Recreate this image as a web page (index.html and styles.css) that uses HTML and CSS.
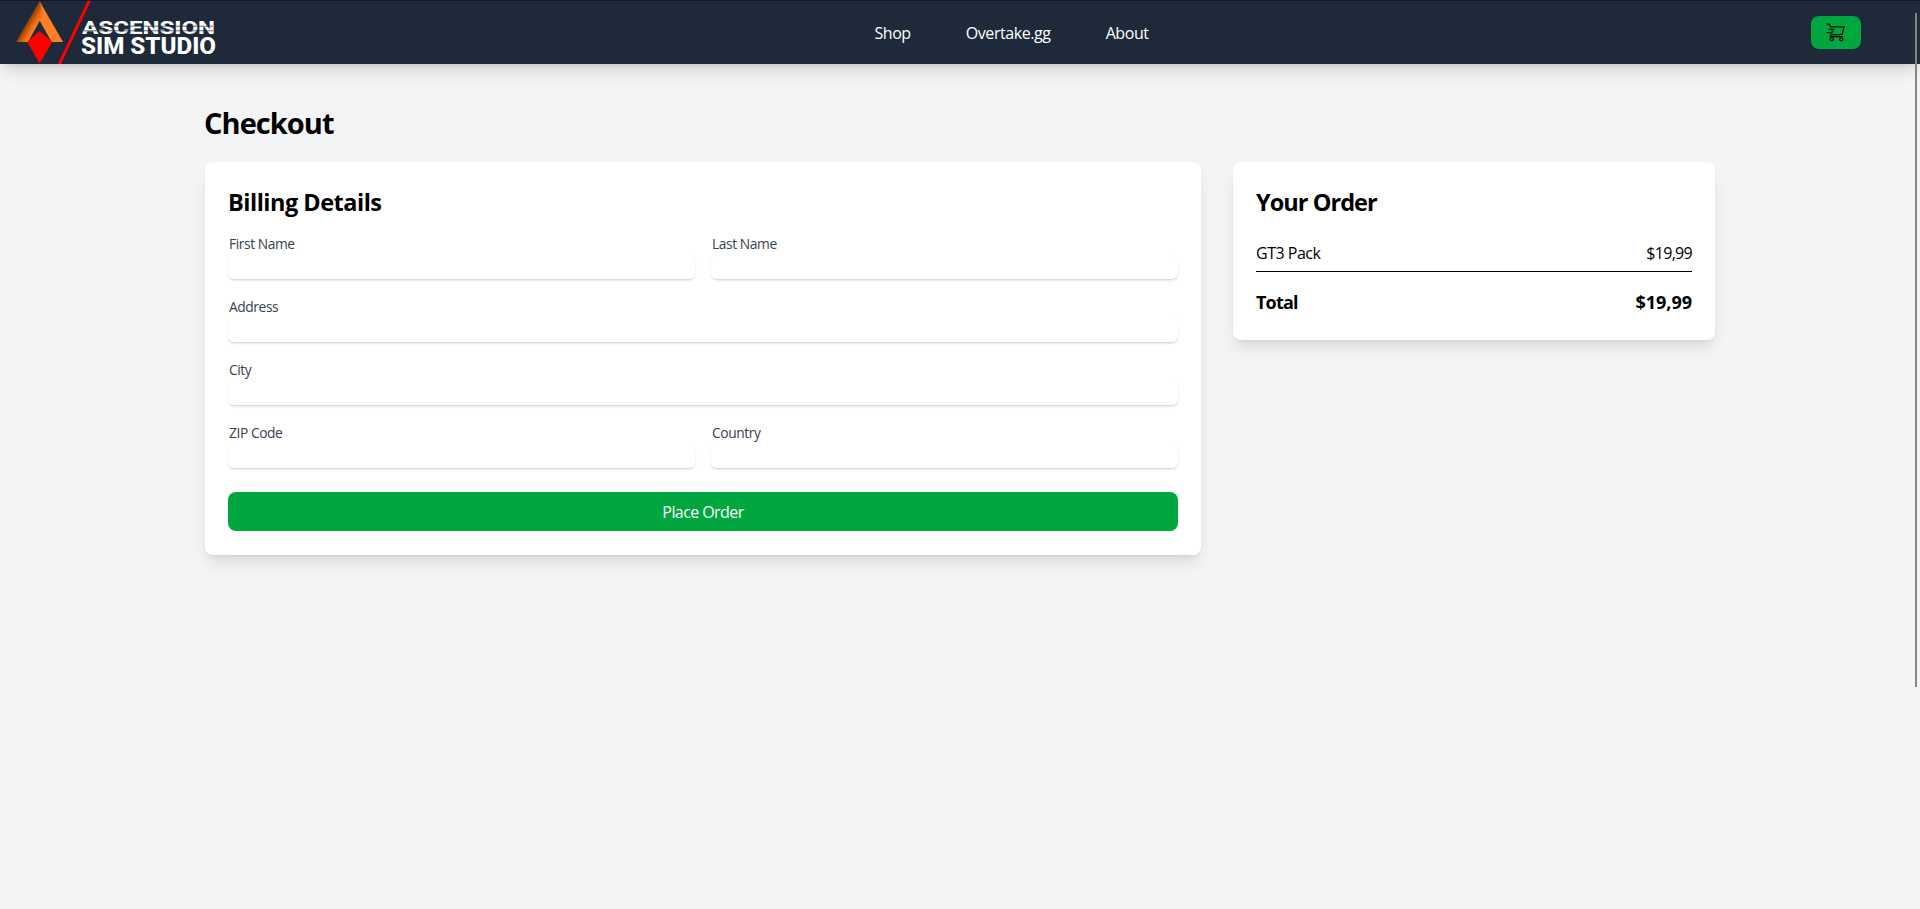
FILE: index.html
```html
<!DOCTYPE html>
<html lang="en">
<head>
<meta charset="utf-8">
<title>Checkout</title>
<link rel="stylesheet" href="styles.css">
</head>
<body>
<header class="header">
  <svg class="logo" viewBox="16 0 195 63" role="img" aria-label="Ascension Sim Studio">
    <defs>
      <linearGradient id="leg" gradientUnits="userSpaceOnUse" x1="25" y1="19" x2="37" y2="26">
        <stop offset="0" stop-color="#5a2606"/>
        <stop offset=".35" stop-color="#a84a0a"/>
        <stop offset=".7" stop-color="#ef6c12"/>
        <stop offset="1" stop-color="#ff7f27"/>
      </linearGradient>
    </defs>
    <path d="M39.5 0L63 41H51.7L39.5 19.5L36 13Z" fill="#ff7f27"/>
    <path d="M39.5 0L16 41H28L43.5 13Z" fill="url(#leg)"/>
    <path d="M39.5 30L52.3 41L39.5 62.5L27.2 41Z" fill="#f00"/>
    <path d="M87.6 0H90.8L61 63H57.8Z" fill="#f00"/>
    <text class="logo-top" x="82" y="33" textLength="133" lengthAdjust="spacingAndGlyphs">ASCENSION</text>
    <path d="M88 25.2H213M84 29.8H213" stroke="#1e2939" stroke-width=".7"/>
    <text class="logo-bottom" x="81" y="52.6" textLength="135" lengthAdjust="spacingAndGlyphs">SIM STUDIO</text>
  </svg>
  <nav class="nav">
    <a class="nav-link">Shop</a>
    <a class="nav-link">Overtake.gg</a>
    <a class="nav-link">About</a>
  </nav>
  <button class="cart" aria-label="Cart">
    <svg class="cart-icon" viewBox="0 0 20 20">
      <path d="M1.5 2.3V1.2H3.4L4.6 3.8H18.2L15.9 11.6H5.6Q4 11.9 4.2 13.7H16.8M2.5 6.3H8.6M5.5 8.1H7.5M.4 9.7H6.6"/>
      <circle cx="5.7" cy="16.2" r="1.6"/><circle cx="15.3" cy="16.2" r="1.6"/>
    </svg>
  </button>
</header>
<main class="page">
  <h1 class="title">Checkout</h1>
  <div class="columns">
    <section class="card billing">
      <h2 class="card-title">Billing Details</h2>
      <form class="form">
        <label class="field"><span class="label">First Name</span><input class="input"></label>
        <label class="field"><span class="label">Last Name</span><input class="input"></label>
        <label class="field wide"><span class="label">Address</span><input class="input"></label>
        <label class="field wide"><span class="label">City</span><input class="input"></label>
        <label class="field"><span class="label">ZIP Code</span><input class="input"></label>
        <label class="field"><span class="label">Country</span><input class="input"></label>
        <button class="submit wide" type="button">Place Order</button>
      </form>
    </section>
    <section class="card">
      <h2 class="card-title order-title">Your Order</h2>
      <div class="item"><span>GT3 Pack</span><span class="price">$19,99</span></div>
      <div class="total"><span class="total-label">Total</span><span>$19,99</span></div>
    </section>
  </div>
</main>
<div class="scroll-thumb"></div>
</body>
</html>
```
FILE: styles.css
```css
* { box-sizing: border-box; margin: 0; }
body {
  height: 909px;
  overflow: hidden;
  background: #f3f4f6;
  color: #000;
  font: 16px/24px "Open Sans", "Noto Sans", sans-serif;
  letter-spacing: -.5px;
}
.header {
  display: flex;
  align-items: center;
  justify-content: space-between;
  height: 64px;
  padding: 0 59px 0 16px;
  border-top: 1px solid #1a1233;
  background: #1e2939;
  box-shadow: 0 10px 15px -3px rgba(0,0,0,.12), 0 4px 6px -4px rgba(0,0,0,.12);
}
.logo { width: 195px; height: 63px; overflow: visible; }
.logo-top { font: 800 18.7px Roboto, sans-serif; fill: #fff; letter-spacing: 0; }
.logo-bottom { font: 800 23.5px Roboto, sans-serif; fill: #fff; letter-spacing: 0; }
.nav { display: flex; gap: 55px; padding-left: 1px; color: #fff; letter-spacing: -.42px; }
.cart {
  display: flex;
  align-items: center;
  justify-content: center;
  width: 50px;
  height: 33px;
  padding: 0;
  border: 0;
  border-radius: 8px;
  background: #00a63e;
}
.cart-icon { width: 20px; height: 20px; fill: none; stroke: #03140a; stroke-width: 1.3; }
.page { width: 1510px; margin: 0 auto; padding-top: 41px; }
.title { margin-left: -1px; font-size: 29px; line-height: 36px; letter-spacing: -.95px; }
.columns {
  display: grid;
  grid-template-columns: 996px 482px;
  gap: 32px;
  align-items: start;
  margin-top: 21px;
}
.card {
  padding: 24px 23px;
  border-radius: 8px;
  background: #fff;
  box-shadow: 0 10px 15px -3px rgba(0,0,0,.1), 0 4px 6px -4px rgba(0,0,0,.1);
}
.card-title { font-size: 23.5px; line-height: 32px; letter-spacing: -.5px; }
.order-title { letter-spacing: -.95px; }
.form { display: grid; grid-template-columns: 1fr 1fr; gap: 16px; margin-top: 14px; }
.wide { grid-column: 1 / -1; }
.field { display: flex; flex-direction: column; }
.label { height: 23px; padding-left: 1px; font-size: 13.8px; line-height: 23px; letter-spacing: -.42px; color: #364153; }
.input {
  width: 100%;
  height: 24px;
  border: 0;
  border-radius: 6px;
  background: #fff;
  box-shadow: 0 2px 3px -1px rgba(0,0,0,.16), 0 1px 2px rgba(0,0,0,.06);
}
.submit {
  height: 39px;
  margin-top: 8px;
  border: 0;
  border-radius: 8px;
  background: #00a63e;
  color: #fff;
  font: inherit;
  letter-spacing: -.58px;
}
.item {
  display: flex;
  justify-content: space-between;
  margin-top: 23px;
  padding-bottom: 6px;
  border-bottom: 1px solid #000;
}
.price { letter-spacing: -.7px; }
.total {
  display: flex;
  justify-content: space-between;
  margin-top: 16px;
  font-size: 18px;
  font-weight: 700;
  line-height: 28px;
  letter-spacing: 0;
}
.total-label { letter-spacing: -.8px; }
.scroll-thumb {
  position: absolute;
  top: 13px;
  left: 1915px;
  width: 2px;
  height: 674px;
  background: #858585;
}
```
